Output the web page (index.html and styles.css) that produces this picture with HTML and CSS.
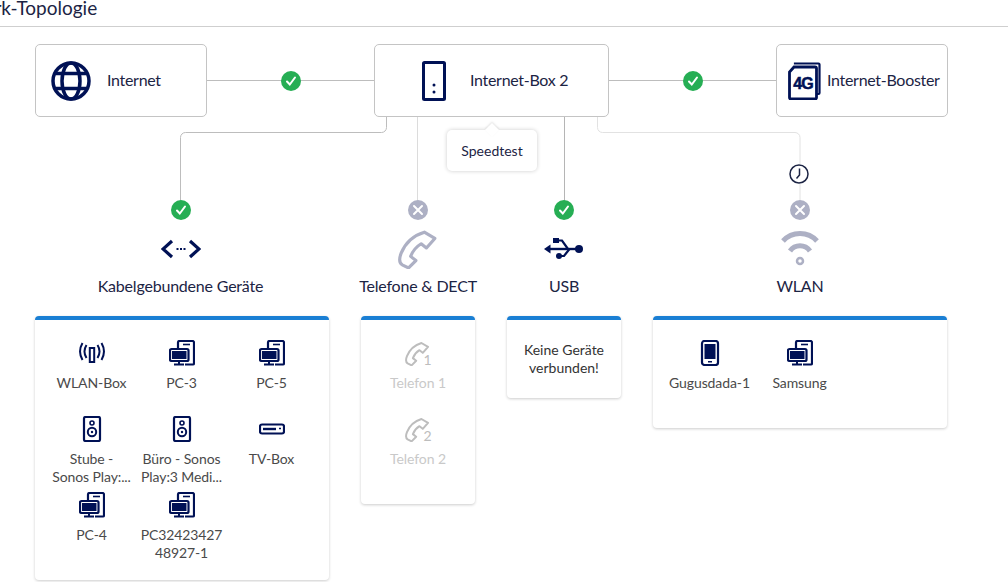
FILE: index.html
```html
<!DOCTYPE html>
<html lang="de">
<head>
  <meta charset="UTF-8">
  <meta name="viewport" content="width=device-width, initial-scale=1.0">
  <title>Netzwerk-Topologie</title>
  <link rel="stylesheet" href="styles.css">
</head>
<body>

<svg class="defs" width="0" height="0">
  <symbol id="pc" viewBox="0 0 26 26">
    <path d="M9 8V2.500A1.500 1.500 0 0 1 10.500 1h13A1.500 1.500 0 0 1 25 2.500v21a1 1 0 0 1-1 1h-8" fill="none" stroke="currentColor" stroke-width="2.200"/>
    <path d="M14 4.500h7" stroke="currentColor" stroke-width="1.600"/>
    <rect x="1" y="9" width="18.500" height="12" rx="1.500" fill="#fff" stroke="currentColor" stroke-width="2.200"/>
    <rect x="3" y="11" width="14.500" height="8" fill="currentColor"/>
    <path d="M10 21v3M5 24.500h10" stroke="currentColor" stroke-width="2"/>
  </symbol>
  <symbol id="speaker" viewBox="0 0 26 26">
    <rect x="5" y="1" width="16" height="24" rx="1.500" fill="none" stroke="currentColor" stroke-width="2.200"/>
    <circle cx="13" cy="7" r="2" fill="none" stroke="currentColor" stroke-width="1.600"/>
    <circle cx="13" cy="16" r="4.200" fill="none" stroke="currentColor" stroke-width="2"/>
    <circle cx="13" cy="16" r="1.200" fill="currentColor"/>
  </symbol>
  <symbol id="handset" viewBox="0 0 38 38">
    <path d="M25 3 35 9 27 18 22 14C17 17 14 21 12 26L17 30 10 37 4 34C1 32 1 28 3 23 7 13 15 6 25 3Z" fill="none" stroke="currentColor" stroke-width="3" stroke-linejoin="round"/>
  </symbol>
  <symbol id="check" viewBox="0 0 20 20">
    <circle cx="10" cy="10" r="10" fill="#26ae54"/>
    <path d="M6 10.500 8.800 13.500 14 6.500" fill="none" stroke="#fff" stroke-width="2" stroke-linecap="round"/>
  </symbol>
  <symbol id="cross" viewBox="0 0 20 20">
    <circle cx="10" cy="10" r="10" fill="#adb0c4"/>
    <path d="M6 6 14 14M14 6 6 14" fill="none" stroke="#fff" stroke-width="2" stroke-linecap="round"/>
  </symbol>
</svg>

<header class="page-head">
  <h1 class="page-title">Netzwerk-Topologie</h1>
</header>

<main class="topology">

  <!-- Verbindungslinien unter den Boxen -->
  <svg class="wires" width="1008" height="210" viewBox="0 0 1008 210" fill="none">
    <path d="M386.500 90v10.500a5 5 0 0 1-5 5H185.500a5 5 0 0 0-5 5v65" stroke="#bdbdbd"/>
    <path d="M417.500 90v86" stroke="#dcdcdc"/>
    <path d="M564.500 90v86" stroke="#b5b5b5"/>
    <path d="M597.500 90v10.500a5 5 0 0 0 5 5H795a5 5 0 0 1 5 5v65" stroke="#e2e2e2"/>
  </svg>

  <section class="top-row">
    <div class="node node-side node-internet">
      <svg class="node-icon globe" viewBox="0 0 40 40" fill="none" stroke="currentColor" stroke-width="3.500">
        <circle cx="20" cy="20" r="18"/>
        <ellipse cx="20" cy="20" rx="9" ry="18"/>
        <path d="M4 12.500h32M4 27.500h32"/>
      </svg>
      <span>Internet</span>
    </div>
    <div class="link"><svg class="badge"><use href="#check"/></svg></div>
    <div class="node node-main">
      <svg class="node-icon box-icon" viewBox="0 0 24 40">
        <rect x="1.500" y="1.500" width="21" height="37" rx="1" fill="none" stroke="currentColor" stroke-width="3"/>
        <circle cx="12" cy="24" r="1.500" fill="currentColor"/>
        <circle cx="12" cy="31" r="1.500" fill="currentColor"/>
      </svg>
      <span>Internet-Box 2</span>
    </div>
    <div class="link link-short"><svg class="badge"><use href="#check"/></svg></div>
    <div class="node node-side node-booster">
      <svg class="node-icon sim" viewBox="0 0 33 38" fill="none" stroke="currentColor">
        <path d="M7 2.500V1.500h23.500a1 1 0 0 1 1 1V31a1 1 0 0 1-1 1H28" stroke-width="2.200"/>
        <path d="M6 5h21a1.500 1.500 0 0 1 1.500 1.500v29A1.500 1.500 0 0 1 27 37H3a1.500 1.500 0 0 1-1.500-1.500V10Z" fill="#fff" stroke-width="2.800"/>
        <text x="15" y="27" class="sim-text">4G</text>
      </svg>
      <span>Internet-Booster</span>
    </div>
  </section>

  <div class="speedtest">Speedtest</div>

  <svg class="clock" viewBox="0 0 20 20" fill="none" stroke="currentColor" stroke-width="1.500">
    <circle cx="10" cy="10" r="9"/>
    <path d="M10.500 4.500V11L7.500 14.500"/>
  </svg>

  <section class="branches">

    <div class="branch">
      <svg class="badge"><use href="#check"/></svg>
      <svg class="branch-icon" viewBox="0 0 40 40" fill="none" stroke="currentColor">
        <path d="M11 12 2 20l9 8M29 12l9 8-9 8" stroke-width="3.200"/>
        <path d="M15.500 20h2M19 20h2M22.500 20h2" stroke-width="2"/>
      </svg>
      <h2 class="branch-label">Kabelgebundene Geräte</h2>
      <div class="card card-grid">
        <div class="device">
          <svg class="device-icon" viewBox="0 0 26 26" fill="none" stroke="currentColor" stroke-width="2">
            <rect x="10.800" y="8" width="4.400" height="14"/>
            <path d="M7.500 5C5 9 5 14 7.500 18M18.500 5c2.500 4 2.500 9 0 13M3.500 3C0 9 0 14 3.500 20M22.500 3c3.500 6 3.500 11 0 17"/>
          </svg>
          <p>WLAN-Box</p>
        </div>
        <div class="device"><svg class="device-icon"><use href="#pc"/></svg><p>PC-3</p></div>
        <div class="device"><svg class="device-icon"><use href="#pc"/></svg><p>PC-5</p></div>
        <div class="device"><svg class="device-icon"><use href="#speaker"/></svg><p>Stube -<br>Sonos Play:...</p></div>
        <div class="device"><svg class="device-icon"><use href="#speaker"/></svg><p>Büro - Sonos<br>Play:3 Medi...</p></div>
        <div class="device">
          <svg class="device-icon" viewBox="0 0 26 26" fill="none" stroke="currentColor" stroke-width="2.200">
            <rect x="1" y="8.500" width="24" height="9" rx="2"/>
            <path d="M4 13h13" stroke-width="2.400"/>
            <path d="M20 12.500h2" stroke-width="1.500"/>
          </svg>
          <p>TV-Box</p>
        </div>
        <div class="device"><svg class="device-icon"><use href="#pc"/></svg><p>PC-4</p></div>
        <div class="device"><svg class="device-icon"><use href="#pc"/></svg><p>PC32423427<br>48927-1</p></div>
      </div>
    </div>

    <div class="branch">
      <svg class="badge"><use href="#cross"/></svg>
      <svg class="branch-icon muted"><use href="#handset"/></svg>
      <h2 class="branch-label">Telefone &amp; DECT</h2>
      <div class="card card-list">
        <div class="device device-off">
          <div class="phone-icon"><svg class="handset-small"><use href="#handset"/></svg><span>1</span></div>
          <p>Telefon 1</p>
        </div>
        <div class="device device-off">
          <div class="phone-icon"><svg class="handset-small"><use href="#handset"/></svg><span>2</span></div>
          <p>Telefon 2</p>
        </div>
      </div>
    </div>

    <div class="branch">
      <svg class="badge"><use href="#check"/></svg>
      <svg class="branch-icon" viewBox="0 0 40 40" fill="none" stroke="currentColor">
        <rect x="9" y="9" width="6" height="5" fill="currentColor" stroke="none"/>
        <path d="M0 20 6.500 15.500v9Z" fill="currentColor" stroke="none"/>
        <path d="M4 20H33" stroke-width="2.400"/>
        <path d="M13 11.500h5l6 8.500M15 27h5l5.500-7" stroke-width="2.200"/>
        <circle cx="35" cy="20" r="4" fill="currentColor" stroke="none"/>
        <circle cx="15" cy="27" r="3" fill="currentColor" stroke="none"/>
      </svg>
      <h2 class="branch-label">USB</h2>
      <div class="card card-empty">Keine Geräte<br>verbunden!</div>
    </div>

    <div class="branch">
      <svg class="badge"><use href="#cross"/></svg>
      <svg class="branch-icon muted" viewBox="0 0 40 40" fill="none" stroke="currentColor" stroke-width="5">
        <path d="M3 12C12 2 28 2 37 12M10 22C15 15 25 15 30 22"/>
        <circle cx="20" cy="32" r="3" stroke-width="2.500"/>
      </svg>
      <h2 class="branch-label">WLAN</h2>
      <div class="card card-grid">
        <div class="device">
          <svg class="device-icon" viewBox="0 0 26 26">
            <rect x="5" y="1" width="16" height="24" rx="2.500" fill="none" stroke="currentColor" stroke-width="2.200"/>
            <rect x="7.500" y="4" width="11" height="15" fill="currentColor"/>
            <rect x="11" y="21" width="4" height="1.500" fill="currentColor"/>
          </svg>
          <p>Gugusdada-1</p>
        </div>
        <div class="device"><svg class="device-icon"><use href="#pc"/></svg><p>Samsung</p></div>
      </div>
    </div>

  </section>
</main>

</body>
</html>
```

FILE: styles.css
```css
/* Allgemein */
body {
  margin: 0;
  height: 582px;
  overflow: hidden;
  background-color: #fff;
  font-family: "Lato", sans-serif;
  color: #1c2444;
}

.defs {
  position: absolute;
}

/* Kopfzeile */
.page-head {
  height: 26px;
  border-bottom: 1px solid #cfcfcf;
  overflow: hidden;
}

.page-title {
  margin: -5px 0 0 -70px;
  font-size: 19px;
  font-weight: 400;
  line-height: 26px;
  white-space: nowrap;
}

/* Diagramm */
.topology {
  position: relative;
  padding: 17px 0 0 35px;
}

.wires {
  position: absolute;
  top: 0;
  left: 0;
}

.top-row {
  position: relative;
  display: flex;
  align-items: center;
  width: 913px;
  height: 73px;
}

.node {
  display: flex;
  align-items: center;
  box-sizing: border-box;
  height: 73px;
  border: 1px solid #c4c4c4;
  border-radius: 5px;
  background-color: #fff;
  font-size: 16px;
  letter-spacing: -0.3px;
  flex: none;
}

.node span {
  margin-top: -3px;
}

.node-side {
  width: 172px;
}

.node-main {
  width: 235px;
  padding-left: 47px;
}

.node-icon {
  color: #001155;
  flex: none;
}

.globe {
  width: 40px;
  height: 40px;
  margin: 0 16px 0 15px;
}

.box-icon {
  width: 24px;
  height: 40px;
  margin-right: 24px;
}

.sim {
  width: 33px;
  height: 38px;
  margin: 0 6px 0 11px;
}

.sim-text {
  font-family: "Liberation Sans", sans-serif;
  font-size: 16px;
  font-weight: 700;
  letter-spacing: -1px;
  text-anchor: middle;
  fill: currentColor;
  stroke: currentColor;
  stroke-width: 0.5px;
}

.node-booster span {
  white-space: nowrap;
}

.link {
  position: relative;
  display: flex;
  flex: 1;
  align-items: center;
  justify-content: center;
  height: 1px;
  background-color: #bdbdbd;
}

.badge {
  position: relative;
  width: 20px;
  height: 20px;
  flex: none;
}

.speedtest {
  position: absolute;
  top: 103px;
  left: 447px;
  box-sizing: border-box;
  width: 90px;
  height: 41px;
  border-radius: 5px;
  background-color: #fff;
  box-shadow: 0 0 4px rgba(0, 0, 0, 0.2);
  font-size: 14px;
  line-height: 42px;
  text-align: center;
}

.speedtest::before {
  content: "";
  position: absolute;
  top: -5px;
  left: 40px;
  width: 10px;
  height: 10px;
  background-color: #fff;
  box-shadow: -1px -1px 2px rgba(0, 0, 0, 0.1);
  transform: rotate(45deg);
}

.clock {
  position: absolute;
  top: 137px;
  left: 789px;
  width: 20px;
  height: 20px;
  background-color: #fff;
  color: #1c2444;
}

/* Bereiche unten */
.branches {
  position: relative;
  display: grid;
  grid-template-columns: 294px 114px 114px 294px;
  column-gap: 32px;
  padding-top: 83px;
}

.branch {
  display: flex;
  flex-direction: column;
  align-items: center;
}

.branch:first-child > :not(.card) {
  margin-right: 3px;
}

.branch-icon {
  width: 40px;
  height: 40px;
  margin-top: 9px;
  color: #001155;
}

.branch-icon.muted {
  color: #adb0c4;
}

.branch-label {
  margin: 5px 0 0;
  font-size: 16px;
  font-weight: 400;
  line-height: 24px;
  letter-spacing: -0.2px;
  white-space: nowrap;
}

.card {
  align-self: stretch;
  box-sizing: border-box;
  margin-top: 18px;
  border-top: 4px solid #1a7fd4;
  border-radius: 4px;
  background-color: #fff;
  box-shadow: 0 1px 3px rgba(0, 0, 0, 0.2);
}

.card-grid {
  display: grid;
  grid-template-columns: repeat(3, 90px);
  grid-auto-rows: 76px;
  justify-content: center;
  padding: 20px 1px 12px 0;
}

.card-list {
  padding: 20px 0 12px;
}

.card-empty {
  padding: 21px 0;
  font-size: 14px;
  line-height: 18px;
  text-align: center;
  color: #333;
}

.device {
  display: flex;
  flex-direction: column;
  align-items: center;
  height: 76px;
}

.device p {
  margin: 8px 0 0;
  font-size: 14px;
  line-height: 18px;
  letter-spacing: -0.1px;
  text-align: center;
  white-space: nowrap;
  color: #4a4a4a;
}

.device-icon {
  width: 26px;
  height: 26px;
  color: #001155;
  flex: none;
}

.device-off p {
  color: #c9c9c9;
}

.phone-icon {
  display: flex;
  align-items: flex-end;
  height: 26px;
  margin-left: 1px;
  color: #bdbdbd;
}

.handset-small {
  width: 25px;
  height: 25px;
}

.phone-icon span {
  margin-left: -7px;
  font-size: 14px;
  line-height: 12px;
}
```
